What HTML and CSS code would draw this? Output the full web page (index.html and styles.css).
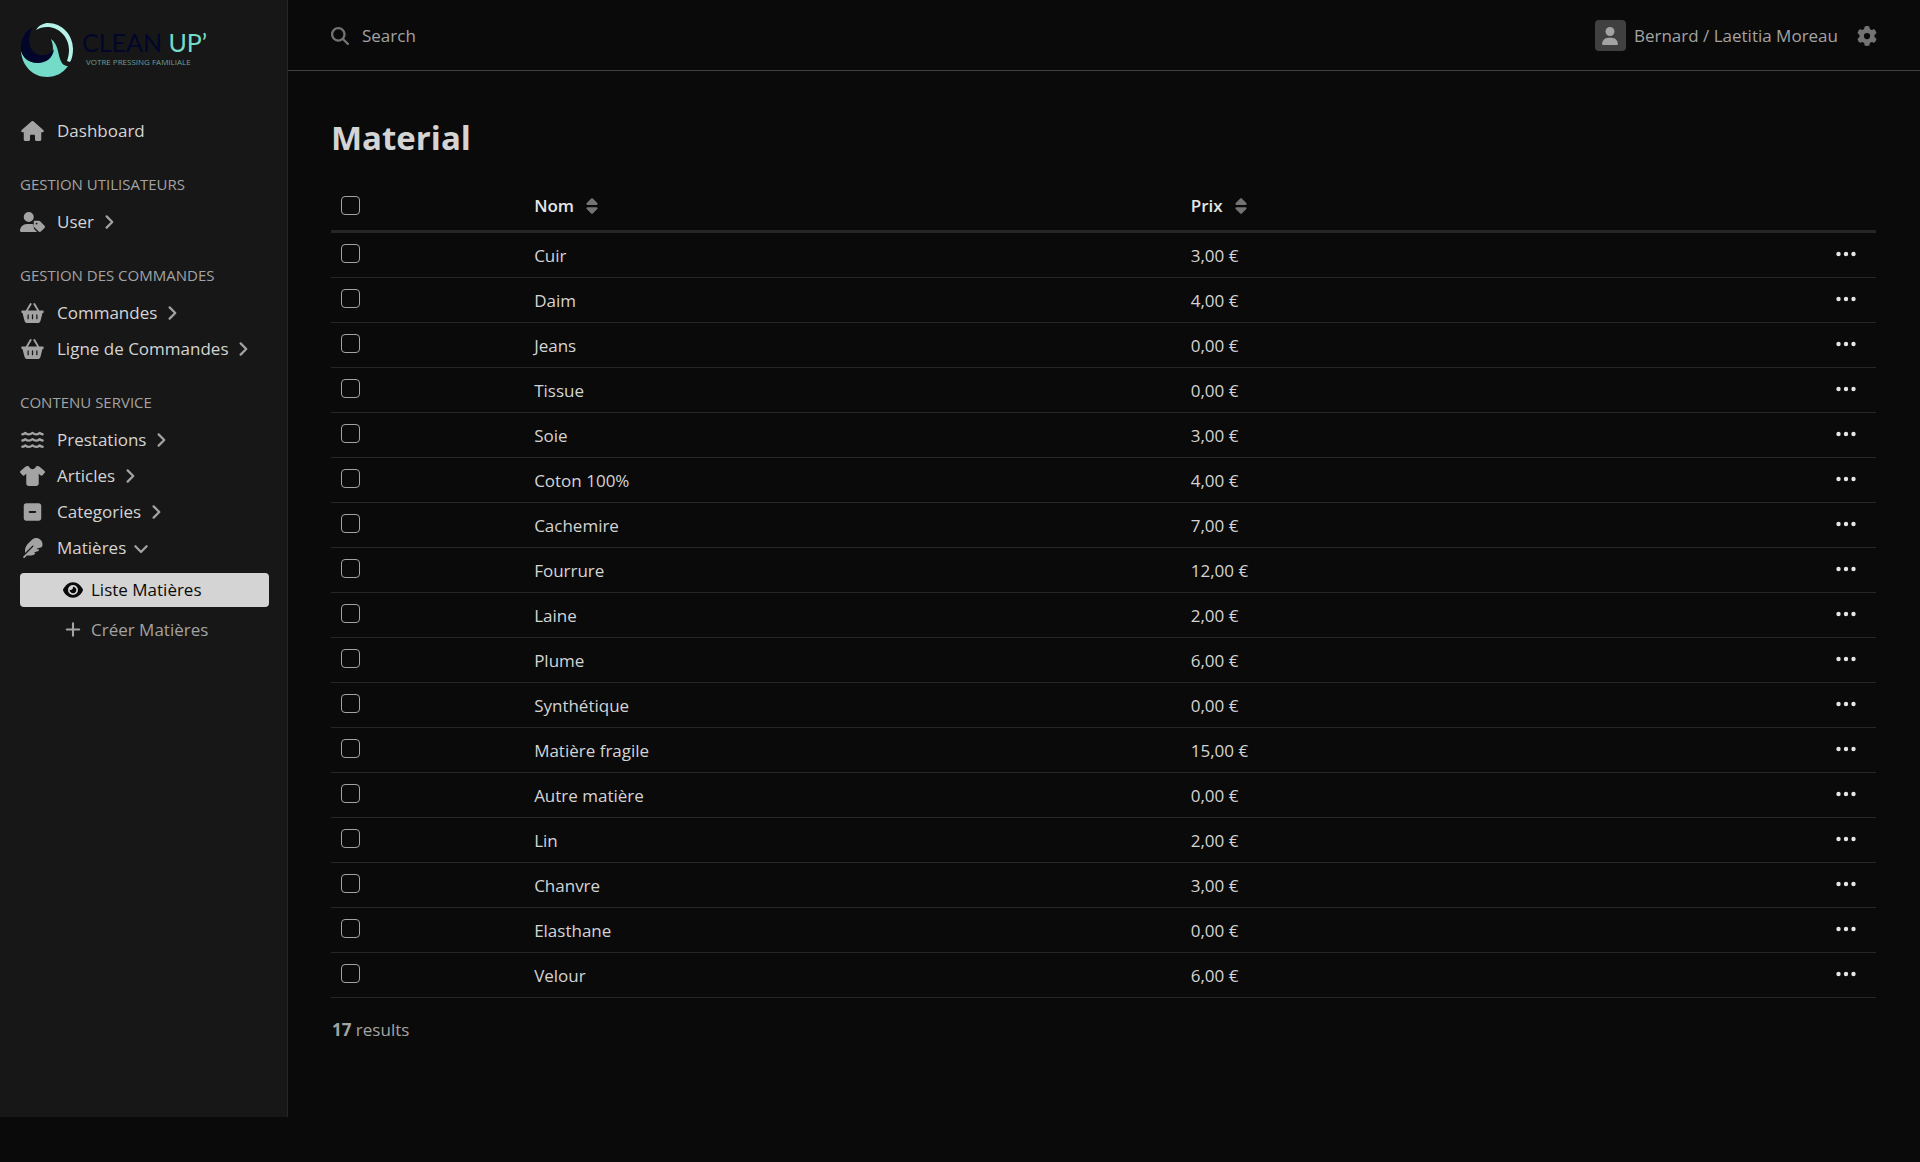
FILE: index.html
```html
<!DOCTYPE html>
<html lang="fr">
<head>
<meta charset="utf-8">
<meta name="viewport" content="width=device-width, initial-scale=1">
<title>Material</title>
<link rel="stylesheet" href="styles.css">
</head>
<body>
<svg class="sprite" aria-hidden="true">
  <symbol id="house" viewBox="0 0 576 512"><path d="M575.8 255.5c0 18-15 32.1-32 32.1h-32l.7 160.2c0 2.7-.2 5.4-.5 8.1V472c0 22.1-17.9 40-40 40H456c-1.1 0-2.2 0-3.3-.1c-1.4 .1-2.8 .1-4.2 .1H416 392c-22.1 0-40-17.9-40-40V448 384c0-17.7-14.3-32-32-32H256c-17.7 0-32 14.3-32 32v64 24c0 22.1-17.9 40-40 40H160 128.1c-1.5 0-3-.1-4.5-.2c-1.2 .1-2.4 .2-3.6 .2H104c-22.1 0-40-17.9-40-40V360c0-.9 0-1.9 .1-2.8V287.6H32c-18 0-32-14-32-32.1c0-9 3-17 10-24L266.4 8c7-7 15-8 22-8s15 2 21 7L564.8 231.5c8 7 12 15 11 24z"/></symbol>
  <symbol id="search" viewBox="0 0 512 512"><path d="M416 208c0 45.9-14.9 88.3-40 122.7L502.6 457.4c12.5 12.5 12.5 32.8 0 45.3s-32.8 12.5-45.3 0L330.7 376c-34.4 25.2-76.8 40-122.7 40C93.1 416 0 322.9 0 208S93.1 0 208 0S416 93.1 416 208zM208 352a144 144 0 1 0 0-288 144 144 0 1 0 0 288z"/></symbol>
  <symbol id="gear" viewBox="0 0 512 512"><path d="M495.9 166.6c3.2 8.7 .5 18.4-6.4 24.6l-43.3 39.4c1.1 8.3 1.7 16.8 1.7 25.4s-.6 17.1-1.7 25.4l43.3 39.4c6.9 6.2 9.6 15.9 6.4 24.6c-4.4 11.9-9.7 23.3-15.8 34.3l-4.7 8.1c-6.6 11-14 21.4-22.1 31.2c-5.9 7.2-15.7 9.6-24.5 6.8l-55.7-17.7c-13.4 10.3-28.2 18.9-44 25.4l-12.5 57.1c-2 9.1-9 16.3-18.2 17.8c-13.8 2.3-28 3.5-42.5 3.5s-28.7-1.2-42.5-3.5c-9.2-1.5-16.2-8.7-18.2-17.8l-12.5-57.1c-15.8-6.5-30.6-15.1-44-25.4L83.1 425.9c-8.8 2.8-18.6 .3-24.5-6.8c-8.1-9.8-15.5-20.2-22.1-31.2l-4.7-8.1c-6.1-11-11.4-22.4-15.8-34.3c-3.2-8.7-.5-18.4 6.4-24.6l43.3-39.4C64.6 273.1 64 264.6 64 256s.6-17.1 1.7-25.4L22.4 191.2c-6.9-6.2-9.6-15.9-6.4-24.6c4.4-11.9 9.7-23.3 15.8-34.3l4.7-8.1c6.6-11 14-21.4 22.1-31.2c5.9-7.2 15.7-9.6 24.5-6.8l55.7 17.7c13.4-10.3 28.2-18.9 44-25.4l12.5-57.1c2-9.1 9-16.3 18.2-17.8C227.3 1.2 241.5 0 256 0s28.7 1.2 42.5 3.5c9.2 1.5 16.2 8.7 18.2 17.8l12.5 57.1c15.8 6.5 30.6 15.1 44 25.4l55.7-17.7c8.8-2.8 18.6-.3 24.5 6.8c8.1 9.8 15.5 20.2 22.1 31.2l4.7 8.1c6.1 11 11.4 22.4 15.8 34.3zM256 336a80 80 0 1 0 0-160 80 80 0 1 0 0 160z"/></symbol>
  <symbol id="user" viewBox="0 0 448 512"><path d="M224 256A128 128 0 1 0 224 0a128 128 0 1 0 0 256zm-45.7 48C79.8 304 0 383.8 0 482.3C0 498.7 13.3 512 29.7 512H418.3c16.4 0 29.7-13.3 29.7-29.7C448 383.8 368.2 304 269.7 304H178.3z"/></symbol>
  <symbol id="user-tag" viewBox="0 0 640 512"><path d="M224 256A128 128 0 1 0 224 0a128 128 0 1 0 0 256zm-46 48C80 304 0 384 0 482c0 17 13 30 30 30h388c6 0 12-2 16-5l-60-60c-15-15-22-34-22-54v-76c-24-9-52-13-82-13z"/><path fill-rule="evenodd" d="M352 241v108c0 18 7 34 19 46l106 105c16 16 42 16 58 0l93-93c16-16 16-42 0-58L522 243c-12-12-28-19-45-19H370c-10 0-18 8-18 17zm72 31a24 24 0 1 1 0 48 24 24 0 1 1 0-48z"/></symbol>
  <symbol id="basket" viewBox="0 0 576 512"><path fill-rule="evenodd" d="M253 4c12 6 16 21 10 33L171 192h234L313 37c-7-12-2-27 10-33s27-2 33 10l104 178h84c18 0 32 14 32 32s-14 32-32 32l-46 176c-8 47-34 80-82 80H160c-48 0-74-33-82-80L32 256c-18 0-32-14-32-32s14-32 32-32h84L220 14c6-12 21-16 33-10zM192 304c0-9-7-16-16-16s-16 7-16 16v96c0 9 7 16 16 16s16-7 16-16v-96zm112 0c0-9-7-16-16-16s-16 7-16 16v96c0 9 7 16 16 16s16-7 16-16v-96zm112 0c0-9-7-16-16-16s-16 7-16 16v96c0 9 7 16 16 16s16-7 16-16v-96z"/></symbol>
  <symbol id="waves" viewBox="0 0 576 512"><g fill="none" stroke="currentColor" stroke-width="62" stroke-linecap="round" stroke-linejoin="round"><path d="M30 108Q70 100 103 75Q150 112 196 112T288 75Q334 112 380 112T473 75Q506 100 546 108"/><path d="M30 268Q70 260 103 235Q150 272 196 272T288 235Q334 272 380 272T473 235Q506 260 546 268"/><path d="M30 428Q70 420 103 395Q150 432 196 432T288 395Q334 432 380 432T473 395Q506 420 546 428"/></g></symbol>
  <symbol id="shirt" viewBox="0 0 640 512"><path d="M211.8 0c7.8 0 14.3 5.7 16.7 13.2C240.8 51.9 277.1 80 320 80s79.2-28.1 91.5-66.8C413.9 5.7 420.4 0 428.2 0h12.6c22.5 0 44.2 7.9 61.5 22.3L628.5 127.4c6.6 5.5 10.7 13.5 11.4 22.1s-2.1 17.1-7.8 23.6l-56 64c-11.4 13.1-31.2 14.6-44.6 3.5L480 197.7V448c0 35.3-28.7 64-64 64H224c-35.3 0-64-28.7-64-64V197.7l-51.5 42.9c-13.3 11.1-33.1 9.6-44.6-3.5l-56-64c-5.7-6.5-8.5-15-7.8-23.6s4.8-16.6 11.4-22.1L137.7 22.3C155 7.9 176.7 0 199.2 0h12.6z"/></symbol>
  <symbol id="square-minus" viewBox="0 0 448 512"><path d="M64 32C28.7 32 0 60.7 0 96V416c0 35.3 28.7 64 64 64H384c35.3 0 64-28.7 64-64V96c0-35.3-28.7-64-64-64H64zm88 200H296c13.3 0 24 10.7 24 24s-10.7 24-24 24H152c-13.3 0-24-10.7-24-24s10.7-24 24-24z"/></symbol>
  <symbol id="feather" viewBox="0 0 512 512"><path d="M278.5 215.6L23 471c-9.4 9.4-9.4 24.6 0 33.9s24.6 9.4 33.9 0l57-57h68c49.7 0 97.9-14.4 139-41c11.1-7.2 5.5-23-7.8-23c-5.1 0-9.2-4.1-9.2-9.2c0-4.1 2.7-7.6 6.5-8.8l81-24.3c2.5-.8 4.8-2.1 6.7-4l22.4-22.4c10.1-10.1 2.9-27.3-11.3-27.3l-32.2 0c-5.1 0-9.2-4.1-9.2-9.2c0-4.1 2.7-7.6 6.5-8.8l112-33.6c4-1.2 7.4-3.9 9.3-7.7C506.4 207.6 512 184.1 512 160c0-41-16.3-80.3-45.3-109.3l-5.5-5.5C432.3 16.3 393 0 352 0s-80.3 16.3-109.3 45.3L139 149C91 197 64 262.1 64 330v55.3L253.6 195.8c6.2-6.2 16.4-6.2 22.6 0c5.4 5.4 6.1 13.6 2.2 19.8z"/></symbol>
  <symbol id="eye" viewBox="0 0 576 512"><path d="M288 32c-80.8 0-145.5 36.8-192.6 80.6C48.6 156 17.3 208 2.5 243.7c-3.3 7.9-3.3 16.7 0 24.6C17.3 304 48.6 356 95.4 399.4C142.5 443.2 207.2 480 288 480s145.5-36.8 192.6-80.6c46.8-43.5 78.1-95.4 93-131.1c3.3-7.9 3.3-16.7 0-24.6c-14.9-35.7-46.2-87.7-93-131.1C433.5 68.8 368.8 32 288 32zM144 256a144 144 0 1 1 288 0 144 144 0 1 1 -288 0zm144-64c0 35.3-28.7 64-64 64c-7.1 0-13.9-1.2-20.3-3.3c-5.5-1.8-11.9 1.6-11.7 7.4c.3 6.9 1.3 13.8 3.2 20.7c13.7 51.2 66.4 81.6 117.6 67.9s81.6-66.4 67.9-117.6c-11.1-41.5-47.8-69.4-88.6-71.1c-5.8-.2-9.2 6.1-7.4 11.7c2.1 6.4 3.3 13.2 3.3 20.3z"/></symbol>
  <symbol id="plus" viewBox="0 0 448 512"><path d="M224 64V416M48 240H400" fill="none" stroke="currentColor" stroke-width="60" stroke-linecap="round"/></symbol>
  <symbol id="chevron-right" viewBox="0 0 320 512"><path d="M64 96L224 256L64 416" fill="none" stroke="currentColor" stroke-width="64" stroke-linecap="round" stroke-linejoin="round"/></symbol>
  <symbol id="chevron-down" viewBox="0 0 512 512"><path d="M96 208L256 368L416 208" fill="none" stroke="currentColor" stroke-width="64" stroke-linecap="round" stroke-linejoin="round"/></symbol>
  <symbol id="sort" viewBox="0 0 320 512"><path d="M137.4 41.4c12.5-12.5 32.8-12.5 45.3 0l128 128c9.2 9.2 11.9 22.9 6.9 34.9s-16.6 19.8-29.6 19.8H32c-12.9 0-24.6-7.8-29.6-19.8s-2.2-25.7 6.9-34.9l128-128zm0 429.3l-128-128c-9.2-9.2-11.9-22.9-6.9-34.9s16.6-19.8 29.6-19.8H288c12.9 0 24.6 7.8 29.6 19.8s2.2 25.7-6.9 34.9l-128 128c-12.5 12.5-32.8 12.5-45.3 0z"/></symbol>
  <symbol id="dots" viewBox="0 0 20 6"><circle cx="2.5" cy="3" r="2.2"/><circle cx="10" cy="3" r="2.2"/><circle cx="17.5" cy="3" r="2.2"/></symbol>
</svg>

<div class="layout">
  <aside class="sidebar">
    <a class="logo" href="#" aria-label="Clean Up">
      <svg class="logo-mark" viewBox="0 0 54 56" aria-hidden="true">
        <path fill="#74dbc9" d="M1 29C5 39 13 42 21 40C31 38 36 30 31 17C38 22 38 31 40 37C42 42 44 44 48 44C43 51 36 55 27 55C13 55 2 44 1 29z"/>
        <path fill="#02062b" d="M13 5C5 9 0 18 1 27C2 36 9 41 18 41C26 41 33 36 34 27C31 32 26 34 20 33C9 31 6 17 13 5z"/>
        <path fill="#b5f3e8" d="M16 8C19 3 24 1 28 1C42 1 53 13 53 27C53 32 52 37 50 40L47 39C48 36 49 32 49 28C49 15 39 5 27 5C23 5 19 6 16 8z"/>
      </svg>
      <span class="logo-text">
        <span class="logo-name">CLEAN <span class="logo-accent">UP’</span></span>
        <span class="logo-tagline">VOTRE PRESSING FAMILIALE</span>
      </span>
    </a>
    <nav class="menu">
      <a class="menu-item" href="#"><svg class="icon"><use href="#house"/></svg>Dashboard</a>
      <h2 class="menu-header">GESTION UTILISATEURS</h2>
      <a class="menu-item" href="#"><svg class="icon"><use href="#user-tag"/></svg>User<svg class="chevron"><use href="#chevron-right"/></svg></a>
      <h2 class="menu-header">GESTION DES COMMANDES</h2>
      <a class="menu-item" href="#"><svg class="icon"><use href="#basket"/></svg>Commandes<svg class="chevron"><use href="#chevron-right"/></svg></a>
      <a class="menu-item" href="#"><svg class="icon"><use href="#basket"/></svg>Ligne de Commandes<svg class="chevron"><use href="#chevron-right"/></svg></a>
      <h2 class="menu-header">CONTENU SERVICE</h2>
      <a class="menu-item" href="#"><svg class="icon"><use href="#waves"/></svg>Prestations<svg class="chevron"><use href="#chevron-right"/></svg></a>
      <a class="menu-item" href="#"><svg class="icon"><use href="#shirt"/></svg>Articles<svg class="chevron"><use href="#chevron-right"/></svg></a>
      <a class="menu-item" href="#"><svg class="icon"><use href="#square-minus"/></svg>Categories<svg class="chevron"><use href="#chevron-right"/></svg></a>
      <a class="menu-item" href="#"><svg class="icon"><use href="#feather"/></svg>Matières<svg class="chevron chevron-open"><use href="#chevron-down"/></svg></a>
      <div class="submenu">
        <a class="submenu-item active" href="#"><svg class="sub-icon"><use href="#eye"/></svg>Liste Matières</a>
        <a class="submenu-item" href="#"><svg class="sub-icon"><use href="#plus"/></svg>Créer Matières</a>
      </div>
    </nav>
  </aside>

  <div class="page">
    <header class="topbar">
      <form class="search">
        <label for="q" aria-label="Search"><svg class="search-icon"><use href="#search"/></svg></label>
        <input id="q" type="text" placeholder="Search">
      </form>
      <div class="account">
        <button class="user" type="button"><span class="avatar"><svg><use href="#user"/></svg></span>Bernard / Laetitia Moreau</button>
        <button class="settings" type="button" aria-label="Settings"><svg><use href="#gear"/></svg></button>
      </div>
    </header>
    <main class="content">
      <h1>Material</h1>
      <table class="grid">
        <colgroup><col class="col-check"><col class="col-name"><col><col class="col-actions"></colgroup>
        <thead>
          <tr>
            <th><input type="checkbox" aria-label="Select all"></th>
            <th><a href="#">Nom<svg><use href="#sort"/></svg></a></th>
            <th><a href="#">Prix<svg><use href="#sort"/></svg></a></th>
            <th></th>
          </tr>
        </thead>
        <tbody id="rows"></tbody>
      </table>
      <p class="results"><strong>17</strong> results</p>
    </main>
  </div>
</div>
<script src="rows.js"></script>
</body>
</html>
```
FILE: rows.js
```js
const materials = [
  ["Cuir", "3,00 €"], ["Daim", "4,00 €"], ["Jeans", "0,00 €"], ["Tissue", "0,00 €"],
  ["Soie", "3,00 €"], ["Coton 100%", "4,00 €"], ["Cachemire", "7,00 €"], ["Fourrure", "12,00 €"],
  ["Laine", "2,00 €"], ["Plume", "6,00 €"], ["Synthétique", "0,00 €"], ["Matière fragile", "15,00 €"],
  ["Autre matière", "0,00 €"], ["Lin", "2,00 €"], ["Chanvre", "3,00 €"], ["Elasthane", "0,00 €"],
  ["Velour", "6,00 €"]
];

document.getElementById("rows").innerHTML = materials.map(([name, price]) => `
  <tr>
    <td><input type="checkbox" aria-label="${name}"></td>
    <td>${name}</td>
    <td>${price}</td>
    <td class="actions"><button type="button" aria-label="Actions ${name}"><svg><use href="#dots"/></svg></button></td>
  </tr>`).join("");
```
FILE: styles.css
```css
* { box-sizing: border-box; }

body {
  margin: 0;
  background: #0a0a0a;
  color: #d4d4d4;
  font: 17px/24px "Open Sans", "Noto Sans", sans-serif;
}

a { color: inherit; text-decoration: none; }
button { border: 0; padding: 0; background: none; color: inherit; font: inherit; cursor: pointer; }
svg { fill: currentColor; flex: none; }
.sprite { position: absolute; width: 0; height: 0; }

.layout {
  display: flex;
  min-height: calc(100vh - 45px);
  margin-bottom: 45px;
}

/* Sidebar */
.sidebar {
  flex: none;
  width: 288px;
  padding: 22px 18px 0 20px;
  background: #171717;
  border-right: 1px solid #262626;
}
.logo { display: flex; gap: 8px; height: 56px; margin-bottom: 35px; }
.logo-mark { width: 54px; height: 56px; }
.logo-text { display: flex; flex-direction: column; padding-top: 6px; font-family: Lato, sans-serif; white-space: nowrap; }
.logo-name { font-size: 25px; line-height: 28px; font-weight: 400; color: #02062b; }
.logo-accent { color: #74dbc9; }
.logo-tagline { padding-left: 4px; font-family: "Open Sans", sans-serif; font-size: 8px; line-height: 12px; color: #6f9f95; }

.menu-item { display: flex; align-items: center; height: 36px; white-space: nowrap; }
.icon { width: 25px; height: 20px; margin-right: 12px; color: #a3a3a3; }
.chevron { width: 12px; height: 18px; margin-left: 10px; color: #a3a3a3; }
.chevron-open { width: 18px; margin-left: 6px; }
.menu-header {
  margin: 23px 0 8px;
  font-size: 15px;
  line-height: 24px;
  font-weight: 500;
  color: #a3a3a3;
  white-space: nowrap;
}
.submenu { display: flex; flex-direction: column; gap: 6px; padding-top: 7px; }
.submenu-item {
  display: flex;
  align-items: center;
  gap: 8px;
  height: 34px;
  padding-left: 43px;
  border-radius: 4px;
  color: #a3a3a3;
}
.sub-icon { width: 20px; height: 18px; }
.submenu-item.active { background: #d4d4d4; color: #0a0a0a; font-weight: 500; }

/* Top bar */
.page { flex: 1; min-width: 0; }
.topbar {
  display: flex;
  align-items: center;
  justify-content: space-between;
  height: 71px;
  padding: 1px 43px 0;
  border-bottom: 1px solid #404040;
}
.search { display: flex; flex: 1; align-items: center; gap: 13px; }
.search label { display: flex; }
.search-icon { width: 18px; height: 18px; color: #737373; }
.search input {
  flex: 1;
  padding: 0;
  border: 0;
  outline: 0;
  background: none;
  color: #d4d4d4;
  font: inherit;
}
.search input::placeholder { color: #a3a3a3; opacity: 1; }
.account { display: flex; align-items: center; gap: 19px; color: #a3a3a3; }
.user { display: flex; align-items: center; gap: 8px; }
.avatar {
  display: flex;
  align-items: center;
  justify-content: center;
  width: 31px;
  height: 31px;
  border-radius: 4px;
  background: #404040;
}
.avatar svg { width: 18px; height: 18px; }
.settings { display: flex; color: #737373; }
.settings svg { width: 20px; height: 20px; }

/* Content */
.content { padding: 43px 44px 0 43px; }
h1 { margin: 0 0 19px; font-size: 33px; line-height: 48px; font-weight: 700; }
.grid { width: 100%; table-layout: fixed; border-collapse: separate; border-spacing: 0; }
.col-check { width: 12.5%; }
.col-name { width: 42.5%; }
.col-actions { width: 120px; }
th { height: 52px; padding: 0 10px; text-align: left; font-weight: 600; color: #e5e5e5; border-bottom: 3px solid #262626; }
th a { display: flex; align-items: center; }
th svg { width: 12px; height: 18px; margin-left: 12px; color: #737373; }
td { height: 45px; padding: 11px 10px 8px; vertical-align: top; border-bottom: 1px solid #262626; }
input[type="checkbox"] {
  display: block;
  appearance: none;
  width: 19px;
  height: 19px;
  margin: 0;
  border: 1px solid #a3a3a3;
  border-radius: 4px;
}
.actions button { display: flex; height: 20px; align-items: center; margin: 0 10px 0 auto; color: #e5e5e5; }
.actions svg { width: 20px; height: 6px; }
.results { margin: 20px 1px; color: #a3a3a3; }
```
